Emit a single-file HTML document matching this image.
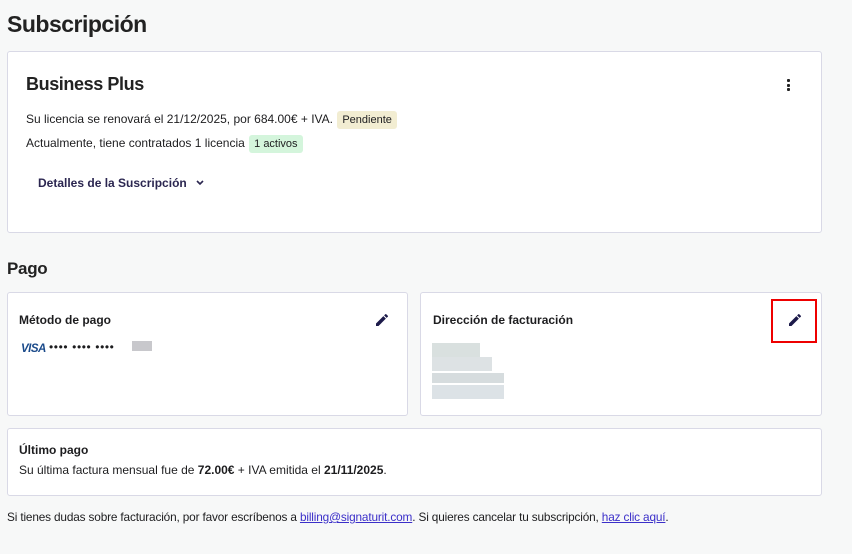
<!DOCTYPE html>
<html><head><meta charset="utf-8"><style>
*{box-sizing:border-box;margin:0;padding:0}
body{width:852px;height:554px;background:#f7f8f8;font-family:"Liberation Sans",Arial,sans-serif;color:#1d1d1f;position:relative;overflow:hidden}
.a{position:absolute}
.card{position:absolute;background:#fff;border:1px solid #d9d9e6;border-radius:3px}
.t{font-size:12px;white-space:nowrap}
.badge{display:inline-block;padding:3px 5px;border-radius:3px;font-size:11px}
.pix{position:absolute;height:8px}
</style></head><body>
<div class="a" style="left:7px;top:11px;font-size:23px;font-weight:bold;letter-spacing:-0.5px;color:#222">Subscripción</div>
<div class="card" style="left:7px;top:51px;width:815px;height:182px">
  <div class="a" style="left:18px;top:22px;font-size:18px;font-weight:bold;letter-spacing:-0.4px;color:#222">Business Plus</div>
  <div class="a" style="left:779px;top:27px;width:4px">
    <div style="width:3px;height:3px;background:#222;border-radius:1px;margin-bottom:1.5px"></div>
    <div style="width:3px;height:3px;background:#222;border-radius:1px;margin-bottom:1.5px"></div>
    <div style="width:3px;height:3px;background:#222;border-radius:1px"></div>
  </div>
  <div class="a t" style="left:18px;top:59px">Su licencia se renovará el 21/12/2025, por 684.00€ + IVA. <span class="badge" style="background:#f2edd2;margin-left:1px">Pendiente</span></div>
  <div class="a t" style="left:18px;top:83px">Actualmente, tiene contratados 1 licencia <span class="badge" style="background:#d4f5dc;margin-left:1px">1 activos</span></div>
  <div class="a t" style="left:30px;top:124px;font-weight:bold;color:#2b2650">Detalles de la Suscripción <svg width="10" height="8" viewBox="0 0 10 8" style="margin-left:5px"><path d="M2 2l3 3 3-3" stroke="#2b2650" stroke-width="1.6" fill="none"/></svg></div>
</div>
<div class="a" style="left:7px;top:259px;font-size:17px;font-weight:bold;letter-spacing:-0.3px;color:#222">Pago</div>
<div class="card" style="left:7px;top:292px;width:401px;height:124px">
  <div class="a t" style="left:11px;top:20px;font-weight:bold">Método de pago</div>
  <svg class="a" style="left:366px;top:19px" width="16" height="16" viewBox="0 0 24 24"><path d="M3 17.25V21h3.75L17.81 9.94l-3.75-3.75L3 17.25zM20.71 7.04a1 1 0 000-1.41l-2.34-2.34a1 1 0 00-1.41 0l-1.83 1.83 3.75 3.75 1.83-1.83z" fill="#1c1a4a"/></svg>
  <div class="a" style="left:13px;top:50px;font-size:11.5px;font-weight:bold;font-style:italic;color:#1a4a8a;letter-spacing:-0.5px">VISA</div>
  <div class="a" style="left:41px;top:47px;font-size:12px;letter-spacing:0.6px">•••• •••• ••••</div>
  <div class="pix" style="left:124px;top:48px;width:20px;height:10px;background:#c8c8cc"></div>
</div>
<div class="card" style="left:420px;top:292px;width:402px;height:124px">
  <div class="a t" style="left:12px;top:20px;font-weight:bold">Dirección de facturación</div>
  <div class="a" style="left:350px;top:6px;width:46px;height:44px;border:2px solid #e00"></div>
  <svg class="a" style="left:366px;top:19px" width="16" height="16" viewBox="0 0 24 24"><path d="M3 17.25V21h3.75L17.81 9.94l-3.75-3.75L3 17.25zM20.71 7.04a1 1 0 000-1.41l-2.34-2.34a1 1 0 00-1.41 0l-1.83 1.83 3.75 3.75 1.83-1.83z" fill="#1c1a4a"/></svg>
  <div class="pix" style="left:11px;top:50px;width:48px;height:14px;background:#d9e0df"></div>
  <div class="pix" style="left:11px;top:64px;width:60px;height:14px;background:#dde2e4"></div>
  <div class="pix" style="left:11px;top:80px;width:72px;height:10px;background:#d6dcde"></div>
  <div class="pix" style="left:11px;top:92px;width:72px;height:14px;background:#dce2e6"></div>
</div>
<div class="card" style="left:7px;top:428px;width:815px;height:68px">
  <div class="a t" style="left:11px;top:14px;font-weight:bold">Último pago</div>
  <div class="a t" style="left:11px;top:34px">Su última factura mensual fue de <b>72.00€</b> + IVA emitida el <b>21/11/2025</b>.</div>
</div>
<div class="a t" style="left:7px;top:510px;letter-spacing:-0.15px;font-size:11.8px">Si tienes dudas sobre facturación, por favor escríbenos a <u style="color:#3b2fc9">billing@signaturit.com</u>. Si quieres cancelar tu subscripción, <u style="color:#3b2fc9">haz clic aquí</u>.</div>
</body></html>
